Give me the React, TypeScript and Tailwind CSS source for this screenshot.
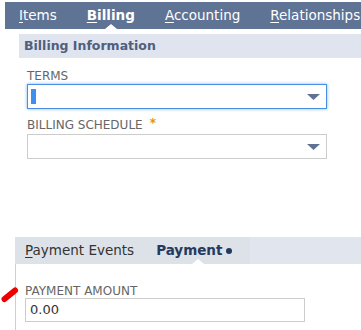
const tabs = [
  { key: 'I', rest: 'tems' },
  { key: 'B', rest: 'illing', active: true },
  { key: 'A', rest: 'ccounting' },
  { key: 'R', rest: 'elationships' },
];

const Arrow = () => (
  <svg width="13" height="6" viewBox="0 0 13 6" className="absolute right-[6px] top-1/2 -translate-y-1/2">
    <path d="M0 0 H13 L6.5 6 Z" fill="#5f7294" />
  </svg>
);

const Notch = ({ left }: { left: number }) => (
  <span
    className="absolute bottom-0 w-0 h-0 border-l-[6px] border-r-[6px] border-b-[5px] border-l-transparent border-r-transparent border-b-white"
    style={{ left }}
  />
);

export default function App() {
  return (
    <div className="relative w-[361px] h-[330px] overflow-hidden bg-white font-['DejaVu_Sans',Verdana,sans-serif]">
      {/* main tabs */}
      <div className="pt-[2px] pl-[5px]">
        <div className="relative flex items-center h-[27px] bg-[#5f7395] pl-[14px] gap-[30px] text-[13.5px] text-white whitespace-nowrap">
          {tabs.map((t) => (
            <span key={t.key} className={t.active ? 'font-bold' : ''}>
              <span className="underline underline-offset-2">{t.key}</span>
              {t.rest}
            </span>
          ))}
          <Notch left={100} />
        </div>
      </div>

      {/* billing information */}
      <div className="pl-[19px] pt-[5px]">
        <div className="h-[24px] bg-[#dfe4ee] flex items-center pl-[5px] text-[12.5px] font-bold text-[#4e5f7f]">
          Billing Information
        </div>
        <div className="pl-[8px] pt-[11px]">
          <div className="text-[12px] leading-[14px] text-[#666]">TERMS</div>
          <div className="relative mt-[1px] w-[300px] h-[25px] border border-[#4a90e2] shadow-[0_0_3px_#7fb2ec]">
            <span className="absolute left-[3px] top-[4px] w-[5px] h-[15px] bg-[#3d8ff0]" />
            <Arrow />
          </div>
          <div className="mt-[9px] text-[12px] leading-[14px] text-[#666]">
            BILLING SCHEDULE
            <span className="ml-[7px] font-bold text-[#e3920e] relative -top-[2px]">*</span>
          </div>
          <div className="relative mt-[2px] w-[300px] h-[25px] border border-[#cccccc]">
            <Arrow />
          </div>
        </div>
      </div>

      {/* subtabs */}
      <div className="pl-[15px] mt-[78px]">
        <div className="relative flex h-[27px] text-[13.5px] whitespace-nowrap bg-[#e0e5ee]">
          <div className="flex items-center w-[235px] bg-[#dde1e8] pl-[10px] gap-[22px]">
            <span className="text-[#333]">
              <span className="underline underline-offset-2">P</span>ayment Events
            </span>
            <span className="flex items-center gap-[4px] font-bold text-[#243a5e]">
              Payment
              <span className="w-[6px] h-[6px] rounded-full bg-[#243a5e]" />
            </span>
          </div>
          <Notch left={177} />
        </div>
        <div className="border-l border-[#cfcfcf] h-[70px] pl-[9px] pt-[20px]">
          <div className="text-[12px] leading-[14px] text-[#666]">PAYMENT AMOUNT</div>
          <div className="w-[280px] h-[24px] border border-[#cccccc] flex items-center pl-[4px] text-[13px] text-[#333]">
            0.00
          </div>
        </div>
      </div>

      {/* red mark */}
      <svg width="22" height="20" viewBox="0 0 22 20" className="absolute left-0 top-[285px]">
        <path d="M4.5 14 L15 5.5" stroke="#ee0000" strokeWidth="6" strokeLinecap="round" />
      </svg>
    </div>
  );
}
